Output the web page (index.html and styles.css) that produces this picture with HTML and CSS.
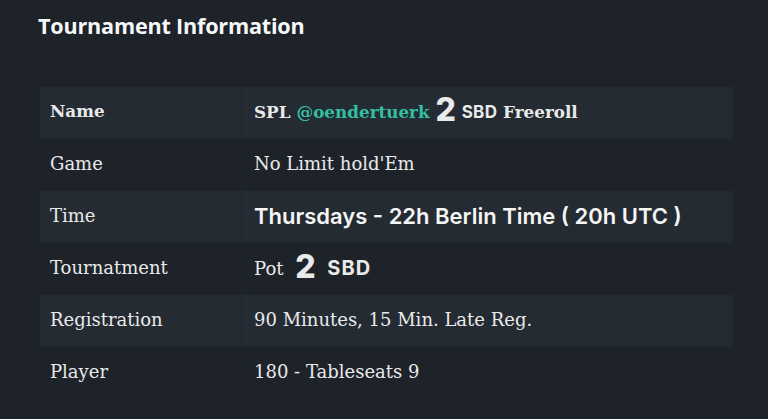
FILE: index.html
```html
<!DOCTYPE html>
<html>
<head>
<meta charset="utf-8">
<link rel="stylesheet" href="styles.css">
</head>
<body>
<div class="page">
  <h2 class="title">Tournament Information</h2>
  <table class="info">
    <tr class="odd name-row">
      <td class="label"><strong>Name</strong></td>
      <td class="value"><strong>SPL <span class="link">@oendertuerk</span> <span class="big">2</span> <span class="sbd">SBD</span> Freeroll</strong></td>
    </tr>
    <tr>
      <td class="label">Game</td>
      <td class="value">No Limit hold'Em</td>
    </tr>
    <tr class="odd">
      <td class="label">Time</td>
      <td class="value"><span class="round">Thursdays - 22h Berlin Time ( 20h UTC )</span></td>
    </tr>
    <tr>
      <td class="label">Tournatment</td>
      <td class="value">Pot <span class="big pot">2</span> <span class="sbd big-sbd">SBD</span></td>
    </tr>
    <tr class="odd">
      <td class="label">Registration</td>
      <td class="value">90 Minutes, 15 Min. Late Reg.</td>
    </tr>
    <tr>
      <td class="label">Player</td>
      <td class="value">180 - Tableseats 9</td>
    </tr>
  </table>
</div>
</body>
</html>
```

FILE: styles.css
```css
html, body {
  margin: 0;
  padding: 0;
  background: #1e232a;
}
.page {
  padding: 8px 35px 0 38px;
  color: #eef0f0;
}
.title {
  font-family: "Open Sans", sans-serif;
  font-weight: 700;
  font-size: 21.6px;
  line-height: 36px;
  margin: 0 0 43px 0;
  letter-spacing: -0.2px;
  color: #f6f7f7;
}
.info {
  border-collapse: collapse;
  width: 693px;
  margin-left: 2px;
  font-family: "DejaVu Serif", serif;
  font-size: 18px;
}
.info tr {
  height: 52px;
}
.info tr.odd {
  background: #252b32;
}
.info td {
  padding: 0 10px 3px 10px;
  vertical-align: middle;
  color: #e9eaea;
}
.info tr.name-row td {
  font-size: 16.8px;
  padding-bottom: 4px;
}
.info td.label {
  width: 181px;
  border-right: 1px solid #1f252c;
}
.info td.value {
  padding-left: 12px;
}
.link {
  color: #33bfa2;
}
.big {
  font-family: "Inter", sans-serif;
  font-weight: 800;
  font-size: 32px;
  line-height: 20px;
  vertical-align: -3px;
}
.sbd {
  font-family: "Inter", sans-serif;
  font-weight: 700;
  font-size: 17px;
  letter-spacing: 0.3px;
}
.pot {
  margin-left: 6px;
  margin-right: 6px;
}
.big-sbd {
  font-size: 20px;
  letter-spacing: 1px;
}
.round {
  font-family: "Inter", sans-serif;
  font-weight: 600;
  font-size: 22px;
  color: #f4f5f5;
}
```
